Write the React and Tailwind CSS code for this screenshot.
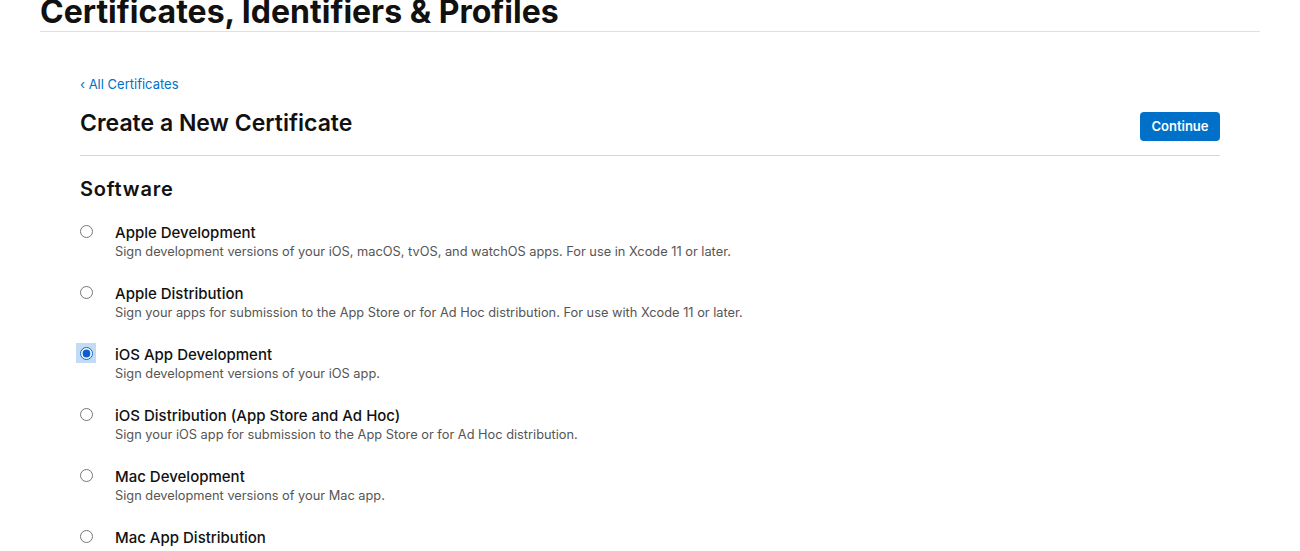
const options = [
  {
    title: "Apple Development",
    desc: "Sign development versions of your iOS, macOS, tvOS, and watchOS apps. For use in Xcode 11 or later.",
  },
  {
    title: "Apple Distribution",
    desc: "Sign your apps for submission to the App Store or for Ad Hoc distribution. For use with Xcode 11 or later.",
  },
  { title: "iOS App Development", desc: "Sign development versions of your iOS app.", checked: true },
  {
    title: "iOS Distribution (App Store and Ad Hoc)",
    desc: "Sign your iOS app for submission to the App Store or for Ad Hoc distribution.",
  },
  { title: "Mac Development", desc: "Sign development versions of your Mac app." },
  {
    title: "Mac App Distribution",
    desc: "This certificate is used to code sign your app and configure a Distribution Provisioning Profile.",
  },
];

export default function App() {
  return (
    <div className="h-[551px] overflow-hidden bg-white text-[#111] font-['Inter','Liberation_Sans',sans-serif]">
      <div className="mx-10 border-b border-[#e0e0e0] h-[32px] flex items-end">
        <h1 className="text-[32px] font-bold leading-none mb-[3px]">
          Certificates, Identifiers &amp; Profiles
        </h1>
      </div>

      <div className="mx-20 pt-[44px]">
        <a href="#" className="text-[13px] text-[#0070c9] leading-4 block">
          ‹ All Certificates
        </a>
        <div className="flex items-start justify-between border-b border-[#d6d6d6] pt-[16px] pb-[14px]">
          <h2 className="text-[23px] font-semibold leading-[30px]">Create a New Certificate</h2>
          <button className="mt-[4px] h-[29px] w-20 rounded bg-[#0070c9] text-[13px] font-semibold text-white">
            Continue
          </button>
        </div>

        <h3 className="mt-[21px] text-[20px] font-semibold tracking-[0.04em] leading-6">Software</h3>

        <div className="mt-[23px] flex flex-col gap-[25px]">
          {options.map((o) => (
            <label key={o.title} className="flex items-start gap-[19px]">
              <span
                className={
                  "flex h-[20px] w-[20px] -ml-1 -mt-[3px] items-center justify-center " +
                  (o.checked ? "bg-[#c2dcf5]" : "")
                }
              >
                <input
                  type="radio"
                  name="cert"
                  defaultChecked={o.checked}
                  className="m-0 h-[13px] w-[13px] accent-[#0a5fd0]"
                />
              </span>
              <div>
                <div className="text-[15px] font-medium leading-[18px]">{o.title}</div>
                <div className="text-[12.8px] text-[#555] leading-[16px] mt-[2px]">{o.desc}</div>
              </div>
            </label>
          ))}
        </div>
      </div>
    </div>
  );
}
